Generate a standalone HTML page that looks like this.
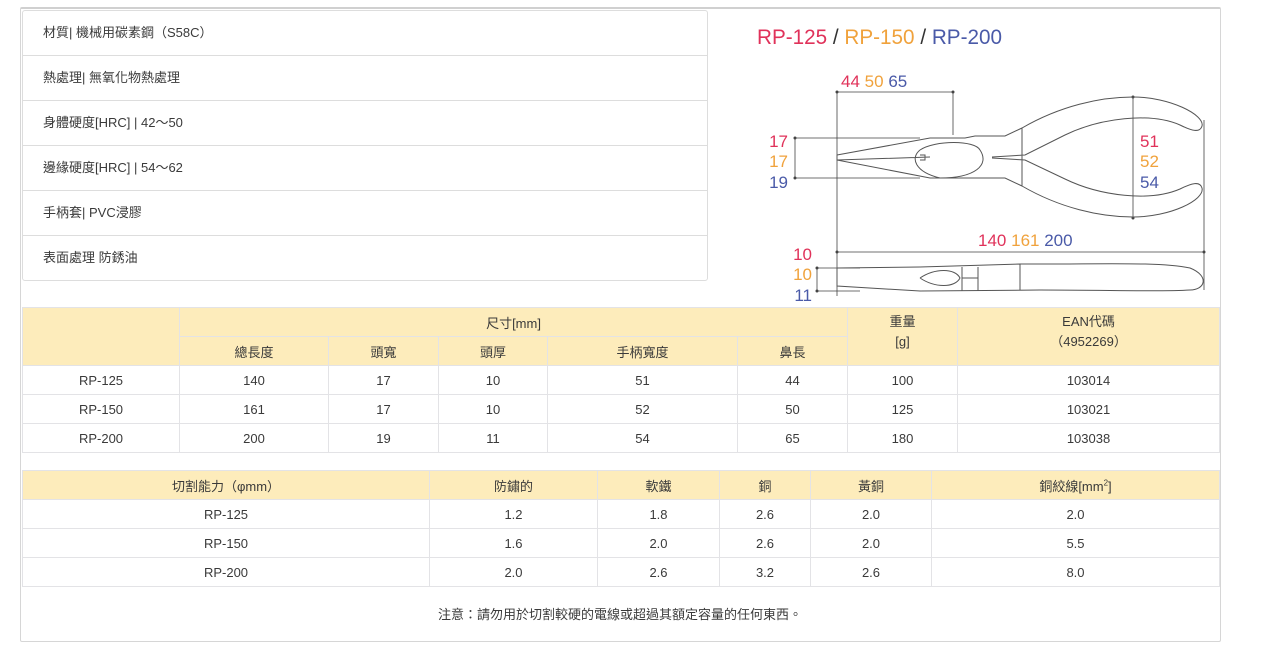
<!DOCTYPE html>
<html><head><meta charset="utf-8"><style>
*{margin:0;padding:0;box-sizing:border-box}
body{width:1280px;height:663px;background:#fff;font-family:"Liberation Sans","Noto Sans CJK TC",sans-serif;font-size:13px;color:#3a3a3a;position:relative;overflow:hidden}
.outer{position:absolute;left:20px;top:7px;width:1201px;height:635px;border:1px solid #d6d6d6;border-top:2px solid #d0d0d0;border-radius:2px}
.spec{position:absolute;left:22px;top:10px;width:686px;height:271px;border:1px solid #ddd;border-radius:3px;background:#fff}
.spec div{height:45px;line-height:44px;padding-left:20px;border-bottom:1px solid #ddd}
.spec div:last-child{border-bottom:none}
table{position:absolute;border-collapse:collapse;table-layout:fixed}
td{border:1px solid #e3e3e6;text-align:center;height:29px;padding:0;font-size:13px}
.h{background:#fdecbb}
.n{position:absolute;top:604px;left:0;width:1240px;text-align:center;font-size:13px}
svg text{font-family:"Liberation Sans",sans-serif}
</style></head><body>
<div class="outer"></div>
<div class="spec">
<div>材質| 機械用碳素鋼（S58C）</div>
<div>熱處理| 無氧化物熱處理</div>
<div>身體硬度[HRC] | 42～50</div>
<div>邊緣硬度[HRC] | 54～62</div>
<div>手柄套| PVC浸膠</div>
<div>表面處理 防銹油</div>
</div>
<svg style="position:absolute;left:0;top:0" width="1280" height="310">
<text x="757" y="44" font-size="21" textLength="245" lengthAdjust="spacingAndGlyphs"><tspan fill="#e0325a">RP-125</tspan><tspan fill="#333"> / </tspan><tspan fill="#f0a23c">RP-150</tspan><tspan fill="#333"> / </tspan><tspan fill="#4a5aa8">RP-200</tspan></text>
<text x="841" y="87" font-size="17"><tspan fill="#e0325a">44</tspan> <tspan fill="#f0a23c">50</tspan> <tspan fill="#4a5aa8">65</tspan></text>
<g font-size="17" text-anchor="end"><text x="788" y="147" fill="#e0325a">17</text><text x="788" y="167" fill="#f0a23c">17</text><text x="788" y="188" fill="#4a5aa8">19</text>
<text x="1140" y="147" fill="#e0325a" text-anchor="start">51</text><text x="1140" y="167" fill="#f0a23c" text-anchor="start">52</text><text x="1140" y="188" fill="#4a5aa8" text-anchor="start">54</text>
<text x="812" y="260" fill="#e0325a">10</text><text x="812" y="280" fill="#f0a23c">10</text><text x="812" y="301" fill="#4a5aa8">11</text></g>
<text x="978" y="246" font-size="17"><tspan fill="#e0325a">140</tspan> <tspan fill="#f0a23c">161</tspan> <tspan fill="#4a5aa8">200</tspan></text>
<g stroke="#444" stroke-width="0.8" fill="none">
<path d="M837 92H953M837 92V296M953 92V135M795 138H920M795 178H920M795 138V178M1133 97V218M837 252H1204M1204 120V290M817 268H860M817 291H860M817 268V291"/>
</g>
<g fill="#444"><circle cx="837" cy="92" r="1.5"/><circle cx="953" cy="92" r="1.5"/><circle cx="795" cy="138" r="1.5"/><circle cx="795" cy="178" r="1.5"/><circle cx="1133" cy="97" r="1.5"/><circle cx="1133" cy="218" r="1.5"/><circle cx="837" cy="252" r="1.5"/><circle cx="1204" cy="252" r="1.5"/><circle cx="817" cy="268" r="1.5"/><circle cx="817" cy="291" r="1.5"/></g>
<g stroke="#555" stroke-width="1" fill="none">
<path d="M837 155L930 138L965 138L975 136L1005 136L1022 128C1060 106 1100 97 1133 97C1170 97 1205 115 1202 126C1200 133 1192 131 1180 125C1150 112 1100 118 1065 135L1025 155L992 157M837 160L930 178L1005 178L1022 186C1060 208 1100 217 1133 217C1170 217 1205 200 1202 188C1200 181 1192 183 1180 189C1150 202 1100 196 1065 179L1025 160L992 158M837 155V160L930 157M920 150C935 140 975 140 980 150C990 165 975 178 940 178C915 172 910 158 920 150M920 155H925V160H920M1022 128V186"/>
<path d="M837 268L920 267L1020 264L1040 264C1110 264 1160 262 1190 268C1210 276 1205 290 1190 290C1160 292 1110 290 1040 290L920 291L837 286Z M920 278C935 268 955 268 960 278C955 288 935 288 920 278M962 267V291M978 267V291M962 278H978M1020 264V290"/>
</g>
</svg>
<table style="left:22px;top:307px;width:1197px">
<colgroup><col style="width:157px"><col style="width:149px"><col style="width:110px"><col style="width:109px"><col style="width:190px"><col style="width:110px"><col style="width:110px"><col style="width:262px"></colgroup>
<tr><td class="h" rowspan="2"></td><td class="h" colspan="5">尺寸[mm]</td><td class="h" rowspan="2" style="vertical-align:top;line-height:20px;padding-top:4px">重量<br>[g]</td><td class="h" rowspan="2" style="vertical-align:top;line-height:20px;padding-top:4px">EAN代碼<br>（4952269）</td></tr>
<tr><td class="h">總長度</td><td class="h">頭寬</td><td class="h">頭厚</td><td class="h">手柄寬度</td><td class="h">鼻長</td></tr>
<tr><td>RP-125</td><td>140</td><td>17</td><td>10</td><td>51</td><td>44</td><td>100</td><td>103014</td></tr>
<tr><td>RP-150</td><td>161</td><td>17</td><td>10</td><td>52</td><td>50</td><td>125</td><td>103021</td></tr>
<tr><td>RP-200</td><td>200</td><td>19</td><td>11</td><td>54</td><td>65</td><td>180</td><td>103038</td></tr>
</table>
<table style="left:22px;top:470px;width:1197px">
<colgroup><col style="width:407px"><col style="width:168px"><col style="width:122px"><col style="width:91px"><col style="width:121px"><col style="width:288px"></colgroup>
<tr><td class="h">切割能力（φmm）</td><td class="h">防鏽的</td><td class="h">軟鐵</td><td class="h">銅</td><td class="h">黃銅</td><td class="h">銅絞線[mm<sup style="font-size:8px">2</sup>]</td></tr>
<tr><td>RP-125</td><td>1.2</td><td>1.8</td><td>2.6</td><td>2.0</td><td>2.0</td></tr>
<tr><td>RP-150</td><td>1.6</td><td>2.0</td><td>2.6</td><td>2.0</td><td>5.5</td></tr>
<tr><td>RP-200</td><td>2.0</td><td>2.6</td><td>3.2</td><td>2.6</td><td>8.0</td></tr>
</table>
<div class="n">注意：請勿用於切割較硬的電線或超過其額定容量的任何東西。</div>
</body></html>
